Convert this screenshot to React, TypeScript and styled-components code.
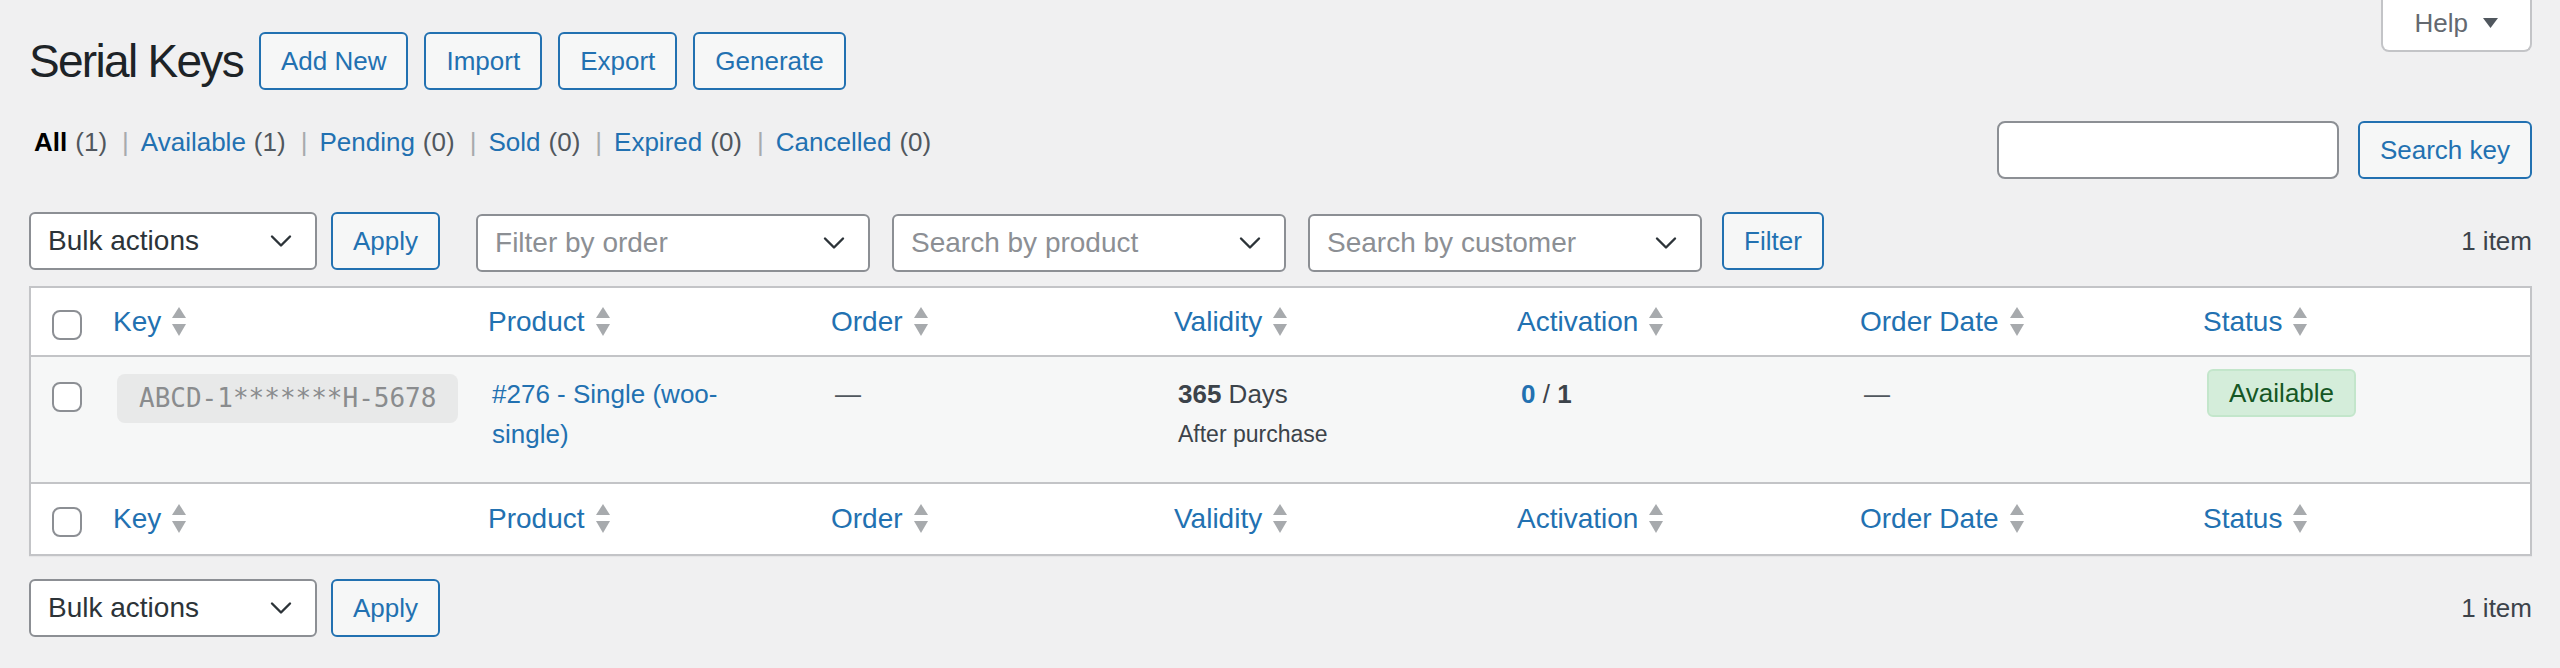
import { FC } from "react";
import styled, { createGlobalStyle } from "styled-components";
import { ChevronDown } from "lucide-react";

const GlobalStyle = createGlobalStyle`
  body {
    margin: 0;
    background: #f0f0f1;
    color: #3c434a;
    font-family: "Liberation Sans", Arial, sans-serif;
    font-size: 26px;
  }
  * {
    box-sizing: border-box;
  }
`;

const Page = styled.div`
  padding: 0 28px 0 29px;
`;

const TopRow = styled.div`
  display: flex;
  justify-content: space-between;
  align-items: flex-start;
`;

const TitleGroup = styled.div`
  display: flex;
  align-items: center;
  gap: 16px;
  padding-top: 32px;
`;

const PageTitle = styled.h1`
  margin: 0;
  font-size: 46px;
  font-weight: 400;
  letter-spacing: -1.7px;
  line-height: 58px;
  color: #1d2327;
`;

const Button = styled.button`
  height: 58px;
  padding: 0 20px;
  border: 2px solid #2271b1;
  border-radius: 6px;
  background: #f6f7f7;
  color: #2271b1;
  font-family: inherit;
  font-size: 26px;
  line-height: 1;
  cursor: pointer;
  white-space: nowrap;
`;

const HelpTab = styled.button`
  display: flex;
  align-items: center;
  gap: 15px;
  height: 52px;
  padding: 0 32px 4px 32px;
  border: 2px solid #c3c4c7;
  border-top: none;
  border-radius: 0 0 8px 8px;
  background: #fff;
  color: #646970;
  font-family: inherit;
  font-size: 26px;
`;

const SubRow = styled.div`
  display: flex;
  justify-content: space-between;
  align-items: flex-start;
  margin-top: 31px;
`;

const StatusLinks = styled.ul`
  display: flex;
  margin: 1px 0 0;
  padding: 0;
  list-style: none;
  line-height: 40px;
  color: #50575e;
`;

const StatusItem = styled.li`
  display: flex;
  align-items: center;
`;

const StatusLink = styled.a<{ $current?: boolean }>`
  padding: 0 5px;
  color: ${(p) => (p.$current ? "#000" : "#2271b1")};
  font-weight: ${(p) => (p.$current ? 700 : 400)};
  text-decoration: none;
`;

const Count = styled.span`
  margin-left: 8px;
  color: #50575e;
  font-weight: 400;
`;

const Separator = styled.span`
  margin: 0 7px 0 10px;
  color: #a7aaad;
`;

const SearchBox = styled.div`
  display: flex;
  gap: 19px;
`;

const SearchInput = styled.input`
  width: 342px;
  height: 58px;
  border: 2px solid #8c8f94;
  border-radius: 8px;
  background: #fff;
`;

const Tablenav = styled.div<{ $top?: boolean }>`
  display: flex;
  align-items: flex-start;
  height: ${(p) => (p.$top ? "62px" : "58px")};
  margin: ${(p) => (p.$top ? "33px 0 12px" : "23px 0 0")};
`;

const BulkGroup = styled.div`
  display: flex;
  gap: 14px;
`;

const FilterGroup = styled.div`
  display: flex;
  align-items: flex-start;
  gap: 22px;
  margin-left: 36px;
  padding-top: 2px;
`;

const SelectBox = styled.div<{ $width: number; $placeholder?: boolean }>`
  display: flex;
  align-items: center;
  justify-content: space-between;
  width: ${(p) => p.$width}px;
  height: 58px;
  padding: 0 16px 0 17px;
  border: 2px solid #8c8f94;
  border-radius: 6px;
  background: #fff;
  color: ${(p) => (p.$placeholder ? "#8c8f94" : "#2c3338")};
  font-size: 28px;
  svg {
    color: #2c3338;
    flex-shrink: 0;
  }
`;

const FilterButton = styled(Button)`
  margin-top: -2px;
  margin-left: -2px;
`;

const ItemCount = styled.div`
  margin-left: auto;
  line-height: 58px;
  color: #3c434a;
`;

const ListTable = styled.table`
  width: 100%;
  table-layout: fixed;
  border: 2px solid #c3c4c7;
  border-spacing: 0;
  background: #fff;
  box-shadow: 0 1px 1px rgba(0, 0, 0, 0.04);
`;

const HeadCell = styled.th<{ $foot?: boolean }>`
  height: ${(p) => (p.$foot ? "72px" : "69px")};
  padding: 0 16px;
  text-align: left;
  font-weight: 400;
  font-size: 28px;
  border-top: ${(p) => (p.$foot ? "2px solid #c3c4c7" : "none")};
  border-bottom: ${(p) => (p.$foot ? "none" : "2px solid #c3c4c7")};
`;

const CheckHead = styled(HeadCell)`
  padding: 6px 0 0 21px;
`;

const SortLink = styled.a`
  display: inline-flex;
  align-items: center;
  gap: 10px;
  color: #2271b1;
  text-decoration: none;
`;

const BodyRow = styled.tr`
  height: 125px;
  background: #f6f7f7;
`;

const Cell = styled.td`
  padding: 17px 20px 0;
  vertical-align: top;
  line-height: 40px;
  color: #50575e;
`;

const CheckCell = styled(Cell)`
  padding: 25px 0 0 21px;
`;

const Checkbox = styled.span`
  display: block;
  width: 30px;
  height: 30px;
  border: 2px solid #8c8f94;
  border-radius: 8px;
  background: #fff;
`;

const KeyBadge = styled.code`
  display: inline-block;
  height: 49px;
  padding: 0 22px;
  border-radius: 8px;
  background: #e8e9e9;
  color: #8a8c8e;
  font-family: "DejaVu Sans Mono", "Liberation Mono", monospace;
  font-size: 26px;
  line-height: 49px;
  white-space: nowrap;
`;

const ProductLink = styled.a`
  display: block;
  max-width: 250px;
  color: #2271b1;
  text-decoration: none;
`;

const Strong = styled.strong<{ $accent?: boolean }>`
  color: ${(p) => (p.$accent ? "#2271b1" : "#3c434a")};
`;

const Note = styled.div`
  font-size: 23px;
  color: #3c434a;
`;

const Emphasis = styled.span`
  color: #3c434a;
`;

const StatusCell = styled(Cell)`
  padding-top: 12px;
`;

const StatusBadge = styled.span`
  display: inline-block;
  height: 48px;
  padding: 0 20px;
  border: 2px solid #c3e6cb;
  border-radius: 6px;
  background: #d4edda;
  color: #155724;
  line-height: 44px;
`;

const SortIndicator: FC = () => (
  <svg width="16" height="30" viewBox="0 0 16 30" fill="#a7aaad">
    <path d="M8 0 L15 11 H1 Z" />
    <path d="M1 17 H15 L8 29 Z" />
  </svg>
);

const columns = ["Key", "Product", "Order", "Validity", "Activation", "Order Date", "Status"];

const statuses = [
  { label: "All", count: 1 },
  { label: "Available", count: 1 },
  { label: "Pending", count: 0 },
  { label: "Sold", count: 0 },
  { label: "Expired", count: 0 },
  { label: "Cancelled", count: 0 },
];

const HeaderRow: FC<{ foot?: boolean }> = ({ foot }) => (
  <tr>
    <CheckHead $foot={foot}>
      <Checkbox />
    </CheckHead>
    {columns.map((name) => (
      <HeadCell key={name} $foot={foot}>
        <SortLink href="#">
          {name}
          <SortIndicator />
        </SortLink>
      </HeadCell>
    ))}
  </tr>
);

const BulkActions: FC = () => (
  <BulkGroup>
    <SelectBox $width={288}>
      Bulk actions
      <ChevronDown size={36} strokeWidth={1.6} />
    </SelectBox>
    <Button>Apply</Button>
  </BulkGroup>
);

export default function App() {
  return (
    <>
      <GlobalStyle />
      <Page>
        <TopRow>
          <TitleGroup>
            <PageTitle>Serial Keys</PageTitle>
            <Button>Add New</Button>
            <Button>Import</Button>
            <Button>Export</Button>
            <Button>Generate</Button>
          </TitleGroup>
          <HelpTab>
            Help
            <svg width="15" height="10" viewBox="0 0 15 10" fill="#50575e">
              <path d="M0 0 H15 L7.5 10 Z" />
            </svg>
          </HelpTab>
        </TopRow>

        <SubRow>
          <StatusLinks>
            {statuses.map((s, i) => (
              <StatusItem key={s.label}>
                <StatusLink href="#" $current={i === 0}>
                  {s.label}
                  <Count>({s.count})</Count>
                </StatusLink>
                {i < statuses.length - 1 && <Separator>|</Separator>}
              </StatusItem>
            ))}
          </StatusLinks>
          <SearchBox>
            <SearchInput type="search" />
            <Button>Search key</Button>
          </SearchBox>
        </SubRow>

        <Tablenav $top>
          <BulkActions />
          <FilterGroup>
            <SelectBox $width={394} $placeholder>
              Filter by order
              <ChevronDown size={36} strokeWidth={1.6} />
            </SelectBox>
            <SelectBox $width={394} $placeholder>
              Search by product
              <ChevronDown size={36} strokeWidth={1.6} />
            </SelectBox>
            <SelectBox $width={394} $placeholder>
              Search by customer
              <ChevronDown size={36} strokeWidth={1.6} />
            </SelectBox>
            <FilterButton>Filter</FilterButton>
          </FilterGroup>
          <ItemCount>1 item</ItemCount>
        </Tablenav>

        <ListTable>
          <colgroup>
            <col style={{ width: 66 }} />
            <col style={{ width: 375 }} />
            <col />
            <col />
            <col />
            <col />
            <col />
            <col />
          </colgroup>
          <thead>
            <HeaderRow />
          </thead>
          <tbody>
            <BodyRow>
              <CheckCell>
                <Checkbox />
              </CheckCell>
              <Cell>
                <KeyBadge>ABCD-1*******H-5678</KeyBadge>
              </Cell>
              <Cell>
                <ProductLink href="#">#276 - Single (woo-single)</ProductLink>
              </Cell>
              <Cell>—</Cell>
              <Cell>
                <Emphasis>
                  <Strong>365</Strong> Days
                </Emphasis>
                <Note>After purchase</Note>
              </Cell>
              <Cell>
                <Strong $accent>0</Strong> <Emphasis>/</Emphasis> <Strong>1</Strong>
              </Cell>
              <Cell>—</Cell>
              <StatusCell>
                <StatusBadge>Available</StatusBadge>
              </StatusCell>
            </BodyRow>
          </tbody>
          <tfoot>
            <HeaderRow foot />
          </tfoot>
        </ListTable>

        <Tablenav>
          <BulkActions />
          <ItemCount>1 item</ItemCount>
        </Tablenav>
      </Page>
    </>
  );
}
